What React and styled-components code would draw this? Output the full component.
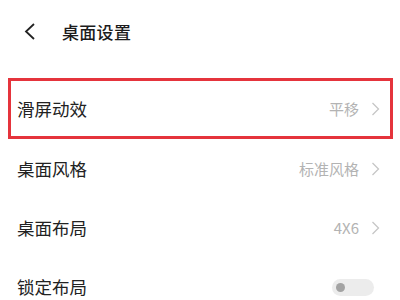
import React from "react"
import styled, { createGlobalStyle } from "styled-components"

const Global = createGlobalStyle`
body {
  margin: 0;
  background: #fff;
  font-family: "Noto Sans CJK SC", "Noto Sans", sans-serif;
}
`

const Page = styled.div`
width: 400px;
height: 300px;
overflow: hidden;
background: #fff;
`

const Header = styled.div`
height: 62px;
display: flex;
align-items: center;
padding-left: 24px;
gap: 26px;
`

const Title = styled.div`
font-size: 17px;
font-weight: 500;
color: #1c1c1c;
letter-spacing: 0.3px;
`

const List = styled.div`
margin-top: 16px;
display: flex;
flex-direction: column;
`

const Row = styled.div`
position: relative;
height: ${p => (p.first ? 61 : 59)}px;
display: flex;
align-items: center;
justify-content: space-between;
padding: 0 20px 0 17px;
box-sizing: border-box;

${p => p.highlighted && `
&::after {
  content: "";
  position: absolute;
  top: 0;
  bottom: 0;
  left: 8px;
  right: 7px;
  border: 3px solid #e5343c;
}
`}
`

const Label = styled.div`
font-size: 17.5px;
color: #222;
`

const Right = styled.div`
display: flex;
align-items: center;
gap: 12px;
`

const Value = styled.div`
font-size: 15px;
color: #b3b3b3;
`

const Toggle = styled.div`
width: 42px;
height: 17px;
border-radius: 9px;
background: #ececec;
display: flex;
align-items: center;
padding-left: 4px;
box-sizing: border-box;
margin-right: 6px;
margin-top: 1px;
`

const Knob = styled.div`
width: 9px;
height: 9px;
border-radius: 50%;
background: #a3a3a3;
`

const Chevron = () => (
  <svg width="9" height="14" viewBox="0 0 9 14">
    <path d="M1.5 1 L7.5 7 L1.5 13" fill="none" stroke="#c6c6c6" strokeWidth="1.3" />
  </svg>
)

const Back = () => (
  <svg width="12" height="17" viewBox="0 0 12 17">
    <path d="M10 1 L2 8.5 L10 16" fill="none" stroke="#222" strokeWidth="1.8" />
  </svg>
)

const rows = [
  { label: "滑屏动效", value: "平移", highlighted: true },
  { label: "桌面风格", value: "标准风格" },
  { label: "桌面布局", value: "4X6" },
  { label: "锁定布局", toggle: true },
]

export default function App() {
  return (
    <Page>
      <Global />
      <Header>
        <Back />
        <Title>桌面设置</Title>
      </Header>
      <List>
        {rows.map((r, i) => (
          <Row key={r.label} first={i === 0} highlighted={r.highlighted}>
            <Label>{r.label}</Label>
            {r.toggle ? (
              <Toggle>
                <Knob />
              </Toggle>
            ) : (
              <Right>
                <Value>{r.value}</Value>
                <Chevron />
              </Right>
            )}
          </Row>
        ))}
      </List>
    </Page>
  )
}
